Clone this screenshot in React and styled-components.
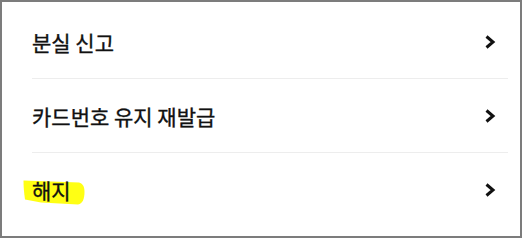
import React from 'react';
import styled, { createGlobalStyle } from 'styled-components';

const GlobalStyle = createGlobalStyle`
  html, body {
    margin: 0;
    padding: 0;
    background: #ffffff;
  }
  body {
    font-family: "Noto Sans CJK KR", "Noto Sans", sans-serif;
  }
`;

const items = [
    { label: '분실 신고' },
    { label: '카드번호 유지 재발급' },
    { label: '해지', marked: true },
];

function Chevron() {
    return (
        <svg width="12" height="16" viewBox="0 0 12 16">
            <polyline points="2.5,2.5 9,8 2.5,13.5" fill="none" stroke="#111" strokeWidth="3" strokeLinejoin="miter" />
        </svg>
    );
}

// highlighter stroke drawn behind the label
function Marker() {
    return (
        <MarkerSvg width="63" height="26" viewBox="0 0 63 26">
            <path
                d="M0.5 0.5 L56 2.5 C60 3.5 61.5 7 61.5 12 C61.5 18 60 23.5 55 24.5 L18 22.5 L2 19.5 C1 13 0.5 6 0.5 0.5 Z"
                fill="#ffff14"
            />
        </MarkerSvg>
    );
}

function App() {
    return (
        <>
            <GlobalStyle />
            <Frame>
                <List>
                    {items.map((item) => (
                        <Row key={item.label}>
                            <Label>
                                {item.marked && <Marker />}
                                <LabelText>{item.label}</LabelText>
                            </Label>
                            <Chevron />
                        </Row>
                    ))}
                </List>
            </Frame>
        </>
    );
}

export default App;

const Frame = styled.div`
    width: 522px;
    height: 238px;
    box-sizing: border-box;
    border: 2px solid #7c7c7c;
    background: #ffffff;
    overflow: hidden;
`;

const List = styled.ul`
    list-style: none;
    margin: 0;
    padding: 3px 12px 0 30px;
`;

const Row = styled.li`
    height: 73px;
    display: flex;
    align-items: center;
    justify-content: space-between;
    padding-right: 12px;
    border-bottom: 1px solid #ededed;

    &:last-child {
        border-bottom: none;
    }
`;

const Label = styled.div`
    position: relative;
    display: flex;
    align-items: center;
    height: 28px;
`;

const LabelText = styled.span`
    position: relative;
    font-size: 21px;
    line-height: 28px;
    font-weight: 400;
    color: #111111;
    -webkit-text-stroke: 0.35px #111111;
`;

const MarkerSvg = styled.svg`
    position: absolute;
    left: -9px;
    top: 4px;
`;
